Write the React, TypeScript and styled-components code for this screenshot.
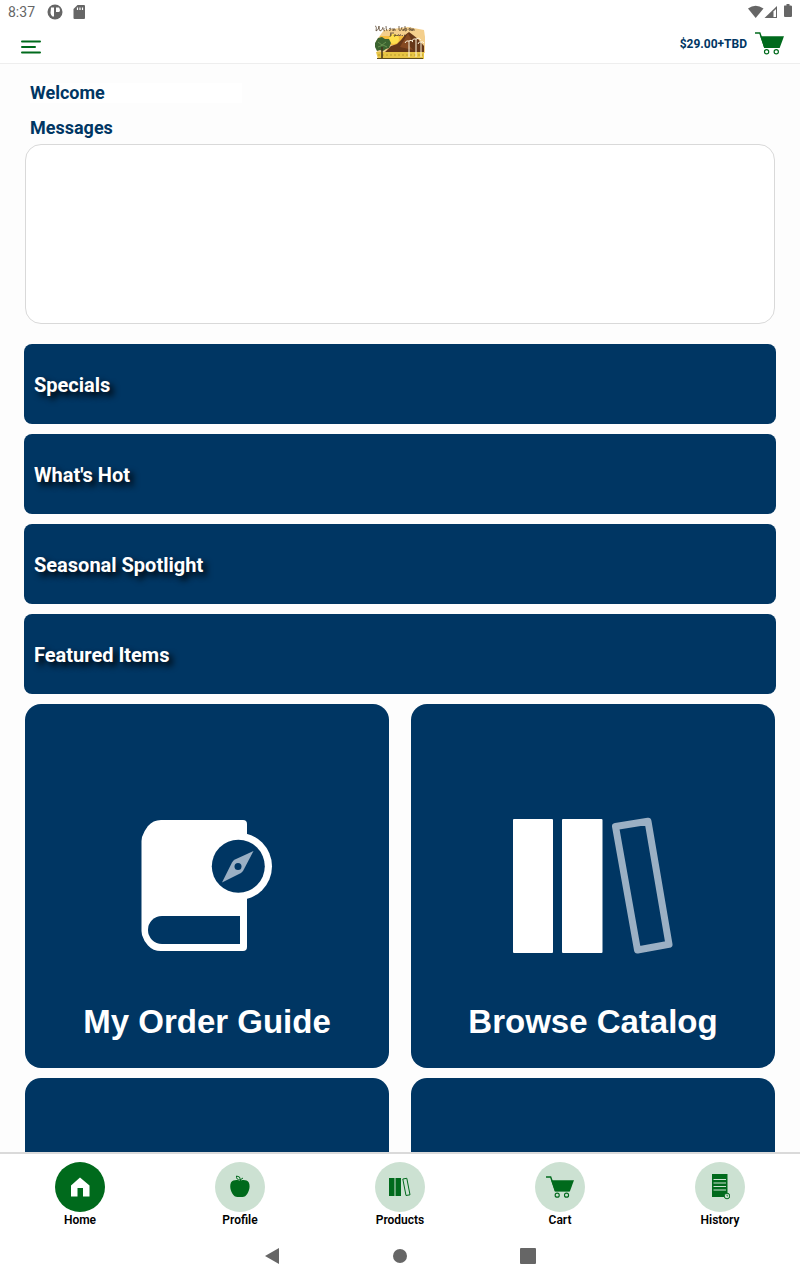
import React from "react";
import styled, { createGlobalStyle } from "styled-components";

const NAVY = "#003663";
const GREEN = "#006a1c";
const MINT = "#cce1d2";
const GREY = "#666666";

const GlobalStyle = createGlobalStyle`
  * { box-sizing: border-box; }
  body { margin: 0; background: #ffffff; font-family: Roboto, "Liberation Sans", sans-serif; }
  button { font-family: inherit; border: 0; padding: 0; cursor: pointer; }
  svg { display: block; }
`;

const Screen = styled.div`
  display: flex;
  flex-direction: column;
  height: 100vh;
`;

const StatusBar = styled.div`
  display: flex;
  align-items: center;
  flex: none;
  height: 24px;
  padding: 0 7px 0 8px;
  color: ${GREY};
  font-size: 14px;
`;

const StatusIcons = styled.div<{ $push?: boolean }>`
  display: flex;
  align-items: center;
  margin-left: ${(p) => (p.$push ? "auto" : "12px")};
`;

const Header = styled.header`
  display: grid;
  grid-template-columns: 1fr auto 1fr;
  align-items: center;
  flex: none;
  height: 40px;
  padding: 0 16px;
  border-bottom: 1px solid #eeeeee;
`;

const LogoLink = styled.a`
  align-self: start;
`;

const MenuButton = styled.button`
  justify-self: start;
  padding: 6px 4px 0;
  background: none;
`;

const CartButton = styled.button`
  display: flex;
  align-items: center;
  gap: 8px;
  justify-self: end;
  background: none;
  color: ${NAVY};
  font-size: 12px;
  font-weight: 700;
`;

const Main = styled.main`
  flex: 1;
  min-height: 0;
  overflow-y: auto;
  scrollbar-width: none;
  padding: 19px 24px;
  background: #fdfdfd;
`;

const Heading = styled.h2<{ $filled?: boolean }>`
  width: ${(p) => (p.$filled ? "212px" : "auto")};
  margin: 0 6px ${(p) => (p.$filled ? "15px" : "6px")};
  background: ${(p) => (p.$filled ? "#ffffff" : "none")};
  color: ${NAVY};
  font-size: 18px;
  line-height: 20px;
  font-weight: 700;
`;

const MessageBox = styled.section`
  height: 180px;
  margin: 0 1px 20px;
  border: 1px solid #d9d9d9;
  border-radius: 16px;
  background: #ffffff;
`;

const BannerList = styled.div`
  display: flex;
  flex-direction: column;
  gap: 10px;
  margin-bottom: 10px;
`;

const Banner = styled.button`
  height: 80px;
  padding: 2px 10px 0;
  border-radius: 8px;
  background: ${NAVY};
  color: #ffffff;
  font-size: 20px;
  font-weight: 700;
  text-align: left;
  text-shadow: 4px 4px 6px #000000;
`;

const TileGrid = styled.div`
  display: grid;
  grid-template-columns: 1fr 1fr;
  gap: 10px 22px;
  padding: 0 1px;
`;

const Tile = styled.button`
  display: flex;
  flex-direction: column;
  align-items: center;
  justify-content: flex-end;
  gap: 46px;
  aspect-ratio: 1;
  padding-bottom: 26px;
  border-radius: 16px;
  background: ${NAVY};
  color: #ffffff;
`;

const TileLabel = styled.span`
  font-family: "Liberation Sans", Arial, sans-serif;
  font-size: 33px;
  line-height: 40px;
  font-weight: 700;
`;

const TabBar = styled.nav`
  display: grid;
  grid-template-columns: repeat(5, 1fr);
  flex: none;
  height: 80px;
  border-top: 2px solid #dadada;
`;

const Tab = styled.a`
  display: flex;
  flex-direction: column;
  align-items: center;
  padding-top: 8px;
  color: #000000;
  font-size: 12px;
  line-height: 16px;
  font-weight: 600;
  text-decoration: none;
`;

const TabDisc = styled.span<{ $active?: boolean }>`
  display: grid;
  place-items: center;
  width: 50px;
  height: 50px;
  border-radius: 50%;
  background: ${(p) => (p.$active ? GREEN : MINT)};
`;

const SystemBar = styled.div`
  display: flex;
  align-items: center;
  justify-content: center;
  gap: 112px;
  flex: none;
  height: 48px;
`;

const SystemButton = styled.button`
  background: none;
`;

const CartIcon = ({ size, wheel }: { size: number; wheel: string }) => (
  <svg width={size} height={(size * 24) / 30} viewBox="0 0 30 24" aria-hidden="true">
    <path d="M0 1h5l5 14.500h15" fill="none" stroke={GREEN} strokeWidth="1.500" />
    <path d="M5.500 4.500H30l-4.500 12H9.500Z" fill={GREEN} />
    <circle cx="12" cy="20.500" r="2.200" fill={wheel} stroke={GREEN} strokeWidth="1.200" />
    <circle cx="22" cy="20.500" r="2.200" fill={wheel} stroke={GREEN} strokeWidth="1.200" />
  </svg>
);

const Logo = () => (
  <svg width="52" height="36" viewBox="0 0 52 36" aria-hidden="true">
    <path d="M10 6 34 3 50 6l1 7v16H3L2 17Z" fill="#f4cf8c" />
    <path d="M6 12h24v9H6Z" fill="#f5bc3f" />
    <circle cx="20" cy="15" r="5" fill="#ffe04c" />
    <path d="M10 29 17 22l6-2 4-4 4-5 4-3 4 3 5 4 6 7v7Z" fill="#653719" />
    <path d="m34 9 3 6-3 5 5 6-13-3Z" fill="#854a22" />
    <path d="M2 28h48v7H4Z" fill="#e8c545" />
    <path d="M4 31h45" stroke="#b99c2d" strokeWidth="1" strokeDasharray="2 2" />
    <path d="M3 34.500h46" stroke="#5f4c1a" strokeWidth="1" />
    <path d="m1 19 3-5 4-1 3 2h4l2 4-2 5-3 1-3 2-3-1-3 1-2-4Z" fill="#3c6430" />
    <path d="m4 18 4 3 4-3M4 23l5-2 4 2" fill="none" stroke="#6a9150" strokeWidth="1" />
    <path d="M8 23v11" stroke="#42301a" strokeWidth="1.500" />
    <path d="M35 33V17m-4 2q1-3 4-2 2-2 4 1m3 15V15m-4 2q1-3 4-2 3-2 5 1m0 17V18m-3 2q1-3 3-2 2-1 3 1" fill="none" stroke="#fff5dc" strokeWidth="1" />
    <path d="M1 2q2 0 1 5 3-1 3-5 0 4 1 5 3-1 3-4m1 1q-1 3 1 3m1-5q0 3 1 5m2-2q2-2 2 0-1 3-2 1m4-2v3q1-3 2-2v2m4-5v4q2 2 3-3m1 2v2q0-2 2-2m0-3v5q2 0 2-2-1-1-2 0m6-1q-3 0-2 2 1 1 2-1v2m1-3v3q1-3 2-2v2" fill="none" stroke="#5b4630" strokeWidth="0.800" />
    <path d="M16 9h4m-3 0-1 4m0-2h2m4 0q-2-1-2 1 1 1 2-1v1m1-1v1q1-2 2-1v1q1-2 2-1v1m2-1-1 1m3-1q-2 0 0 1" fill="none" stroke="#5b4630" strokeWidth="0.800" />
  </svg>
);

const GuideArt = () => (
  <svg width="164" height="140" viewBox="125 816 164 140" aria-hidden="true">
    <path d="M161 820h82q4 0 4 4v123q0 4-4 4h-82q-8 0-13-5.500-4-4-6-10.500l-.500-4v-90l.500-4q2-6 6-11 5-6 13-6Z" fill="#fff" />
    <circle cx="238.300" cy="866.300" r="33.700" fill="#fff" />
    <circle cx="238.300" cy="866.300" r="26.500" fill={NAVY} />
    <path d="M253.500 851 243 871q-1 1-2 2l-19 9.500 10-20q1-2 3-3Z" fill="#9bb0c4" />
    <circle cx="238" cy="866.500" r="3.500" fill={NAVY} />
    <path d="M162 916h78v28h-78a14 14 0 0 1 0-28Z" fill={NAVY} />
  </svg>
);

const CatalogArt = () => (
  <svg width="164" height="140" viewBox="511 816 164 140" aria-hidden="true">
    <rect x="513" y="819" width="40" height="134" rx="1" fill="#fff" />
    <rect x="562" y="819" width="40.500" height="134" rx="1" fill="#fff" />
    <path d="m615.500 826.500 32.500-5.200 21 123-31.500 5.700Z" fill="none" stroke="#9bb0c4" strokeWidth="7" strokeLinejoin="round" />
  </svg>
);

const HomeIcon = () => (
  <svg width="20" height="20" viewBox="0 0 20 20" aria-hidden="true">
    <path d="M10 0.500 19.500 8.500V19.500H13V11H7.500v8.500H1V8.500Z" fill="#fff" />
  </svg>
);

const AppleIcon = () => (
  <svg width="20" height="24" viewBox="0 0 20 24" aria-hidden="true">
    <path d="M10 6C12 4.500 17 4.500 18.800 7.500c1.500 3 .700 8-1.300 11-1.500 2.500-3 3.500-5 3.500h-5c-2 0-3.800-1-5.200-3.500-2-3-2.800-8-1.300-11C3 4.500 8 4.500 10 6Z" fill={GREEN} />
    <path d="M10 7q0-3 3-4M10.500 5Q6 5 6.500 1q4 0 4 4Z" fill="none" stroke={GREEN} strokeWidth="1" />
  </svg>
);

const BooksIcon = () => (
  <svg width="22" height="20" viewBox="0 0 22 20" aria-hidden="true">
    <path d="M0 1h5.500v18H0ZM6.500 1H12v18H6.500Z" fill={GREEN} />
    <path d="m13.800 2 4-.700 3.200 16.500-4 .700Z" fill="none" stroke={GREEN} strokeWidth="1" />
  </svg>
);

const ReceiptIcon = () => (
  <svg width="20" height="26" viewBox="0 0 20 26" aria-hidden="true">
    <path d="M2 0h15.500v23H2Z" fill={GREEN} />
    <path d="M3.500 5.500H16M3.500 9H16M3.500 12.500H16M3.500 16H16" stroke={MINT} strokeWidth="1" />
    <circle cx="17" cy="22" r="2.800" fill={MINT} stroke={GREEN} strokeWidth="1" />
    <path d="M17 20.500V22h1" fill="none" stroke={GREEN} strokeWidth="0.700" />
  </svg>
);

const banners = ["Specials", "What's Hot", "Seasonal Spotlight", "Featured Items"];

const tabs = [
  { label: "Home", icon: <HomeIcon />, active: true },
  { label: "Profile", icon: <AppleIcon /> },
  { label: "Products", icon: <BooksIcon /> },
  { label: "Cart", icon: <CartIcon size={28} wheel={MINT} /> },
  { label: "History", icon: <ReceiptIcon /> },
];

export default function App() {
  return (
    <Screen>
      <GlobalStyle />
      <StatusBar>
        <span>8:37</span>
        <StatusIcons>
          <svg width="40" height="16" viewBox="0 0 40 16" aria-hidden="true">
            <circle cx="8" cy="8" r="7.500" fill={GREY} />
            <path d="M4 3.500h3v9H5.500Q4 12 3.500 9ZM9 3.500h3q1 1 1 3.500l-1 1H9Z" fill="#fff" />
            <path d="M30.500 1H37q1 0 1 1v12q0 1-1 1H27.500q-1 0-1-1V5Z" fill={GREY} />
            <path d="M30.500 3.500v2.500M33 3.500v2.500M35.500 3.500v2.500" stroke="#fff" strokeWidth="1.200" />
          </svg>
        </StatusIcons>
        <StatusIcons $push>
          <svg width="46" height="16" viewBox="0 0 46 16" aria-hidden="true">
            <path d="M1 4.500Q8.500-1 16.500 4.500L8.700 14Z" fill={GREY} />
            <path d="M30 2v12H17.500Z" fill={GREY} />
            <path d="M26.500 7.500 29 5v8h-2.500Z" fill="#fff" />
            <path d="M38.500 1.500h1V0h3v1.500h1q1.500 0 1.500 1V12q0 1-1 1h-6q-1 0-1-1V2.500q0-1 .500-1Z" fill={GREY} />
          </svg>
        </StatusIcons>
      </StatusBar>

      <Header>
        <MenuButton aria-label="Menu">
          <svg width="22" height="14" viewBox="0 0 22 14" aria-hidden="true">
            <path d="M2 1.500h18M2 7h13M2 12.500h18" stroke={GREEN} strokeWidth="2" strokeLinecap="round" />
          </svg>
        </MenuButton>
        <LogoLink href="#" aria-label="Farm home page">
          <Logo />
        </LogoLink>
        <CartButton>
          $29.00+TBD
          <CartIcon size={29} wheel="#ffffff" />
        </CartButton>
      </Header>

      <Main>
        <Heading $filled>Welcome</Heading>
        <Heading id="messages">Messages</Heading>
        <MessageBox aria-labelledby="messages" />
        <BannerList>
          {banners.map((label) => (
            <Banner key={label}>{label}</Banner>
          ))}
        </BannerList>
        <TileGrid>
          <Tile>
            <GuideArt />
            <TileLabel>My Order Guide</TileLabel>
          </Tile>
          <Tile>
            <CatalogArt />
            <TileLabel>Browse Catalog</TileLabel>
          </Tile>
          <Tile />
          <Tile />
        </TileGrid>
      </Main>

      <TabBar>
        {tabs.map((tab) => (
          <Tab key={tab.label} href="#">
            <TabDisc $active={tab.active}>{tab.icon}</TabDisc>
            {tab.label}
          </Tab>
        ))}
      </TabBar>

      <SystemBar>
        <SystemButton aria-label="Back">
          <svg width="16" height="18" viewBox="0 0 16 18" aria-hidden="true">
            <path d="M15 1v16L1 9Z" fill={GREY} />
          </svg>
        </SystemButton>
        <SystemButton aria-label="Home screen">
          <svg width="16" height="16" viewBox="0 0 16 16" aria-hidden="true">
            <circle cx="8" cy="8" r="7" fill={GREY} />
          </svg>
        </SystemButton>
        <SystemButton aria-label="Recent apps">
          <svg width="16" height="16" viewBox="0 0 16 16" aria-hidden="true">
            <rect width="16" height="16" rx="1" fill={GREY} />
          </svg>
        </SystemButton>
      </SystemBar>
    </Screen>
  );
}
